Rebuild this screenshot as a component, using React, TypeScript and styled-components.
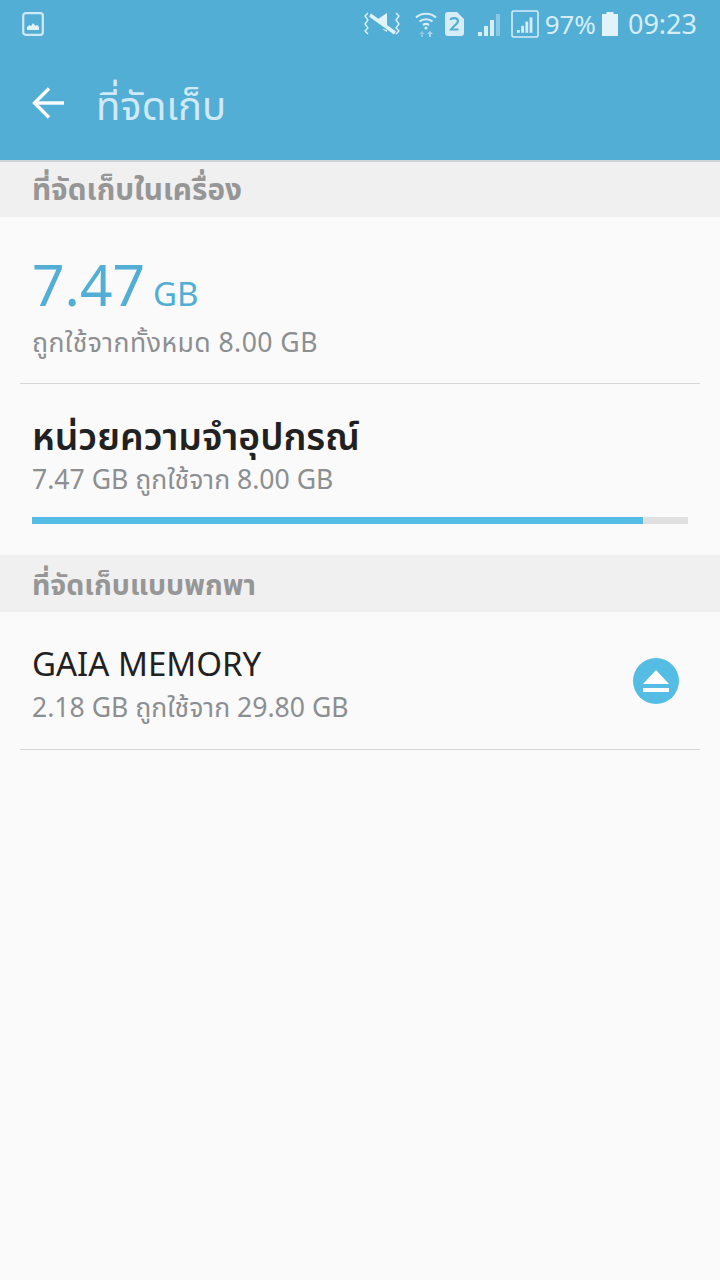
import React from "react";
import styled, { createGlobalStyle } from "styled-components";

const GlobalStyle = createGlobalStyle`
  html, body {
    margin: 0;
    padding: 0;
    background: #fafafa;
  }
  * {
    box-sizing: border-box;
  }
`;

const FONT = `"Noto Sans", "Noto Sans Thai", "Noto Sans Thai Looped", Roboto, sans-serif`;

const Page = styled.div`
  width: 720px;
  height: 1280px;
  overflow: hidden;
  background: #fafafa;
  font-family: ${FONT};
  display: flex;
  flex-direction: column;
`;

const Header = styled.header`
  height: 162px;
  background: #52aed5;
  border-bottom: 2px solid #cfd4d6;
  display: flex;
  flex-direction: column;
`;

const StatusBar = styled.div`
  height: 50px;
  padding: 0 23px 2px 22px;
  display: flex;
  align-items: center;
  color: #d6edf7;
`;

const StatusRight = styled.div`
  margin-left: auto;
  display: flex;
  align-items: center;
`;

const StatusText = styled.span<{ $gap: number; $size: number }>`
  font-size: ${(p) => p.$size}px;
  line-height: 50px;
  margin-left: ${(p) => p.$gap}px;
`;

const StatusIcon = styled.svg<{ $gap?: number }>`
  display: block;
  margin-left: ${(p) => p.$gap ?? 0}px;
`;

const ActionBar = styled.div`
  flex: 1;
  display: flex;
  align-items: center;
  padding: 0 0 4px 32px;
`;

const Title = styled.h1`
  margin: 0 0 0 32px;
  padding-top: 4px;
  font-size: 40px;
  line-height: 44px;
  font-weight: 400;
  color: #cfe9f5;
`;

const SectionHeader = styled.div<{ $tall?: boolean }>`
  height: ${(p) => (p.$tall ? 57 : 55)}px;
  padding-left: 32px;
  background: #f0f0f0;
  color: #969696;
  font-size: ${(p) => (p.$tall ? 28.5 : 29.7)}px;
  font-weight: 700;
  line-height: ${(p) => (p.$tall ? 58 : 54)}px;
`;

const UsageBlock = styled.section`
  height: 167px;
  margin: 0 20px;
  padding: 35px 12px 0;
  border-bottom: 1px solid #d6d6d6;
`;

const UsageLine = styled.div`
  display: flex;
  align-items: baseline;
  color: #52aed5;
  height: 64px;
`;

const UsageValue = styled.span`
  font-size: 57px;
  line-height: 64px;
`;

const UsageUnit = styled.span`
  font-size: 33px;
  margin-left: 8px;
`;

const SubText = styled.div<{ $top?: number; $wide?: boolean }>`
  color: #8c8f92;
  font-size: 26.6px;
  line-height: 34px;
  letter-spacing: ${(p) => (p.$wide ? 0.45 : 0)}px;
  margin-top: ${(p) => p.$top ?? 0}px;
`;

const DeviceBlock = styled.section`
  height: 171px;
  padding: 30px 32px 0;
`;

const ItemTitle = styled.div<{ $thai?: boolean }>`
  color: #212121;
  font-size: ${(p) => (p.$thai ? 37.3 : 33)}px;
  line-height: 44px;
  font-weight: ${(p) => (p.$thai ? 600 : 400)};
`;

const ProgressTrack = styled.div`
  height: 7px;
  margin-top: 21px;
  background: #e0e0e0;
`;

const ProgressFill = styled.div`
  height: 100%;
  background: #55bde3;
`;

const CardRow = styled.section`
  height: 138px;
  margin: 0 20px;
  padding: 30px 21px 0 12px;
  border-bottom: 1px solid #d6d6d6;
  display: flex;
  justify-content: space-between;
`;

const EjectButton = styled.button`
  width: 46px;
  height: 46px;
  margin-top: 16px;
  padding: 0;
  border: 0;
  border-radius: 50%;
  background: #55bde3;
  display: flex;
  align-items: center;
  justify-content: center;
`;

const PictureIcon = () => (
  <StatusIcon width="22" height="24" viewBox="0 0 22 24">
    <rect x="1.2" y="1.2" width="19.6" height="21.6" rx="2.5" fill="none" stroke="#cfe9f5" strokeWidth="2.2" />
    <path d="M5 18v-3l2.5-2 1.5 1.2L11 11l2.5 3 1.5-1.2 2 2.2v3z" fill="#e3f3fa" />
  </StatusIcon>
);

const VibrateIcon = () => (
  <StatusIcon width="38" height="24" viewBox="0 0 38 24" fill="none">
    <path d="M5 1l-3 3 3 4-3 4 3 4-3 3 3 3" stroke="#e3f3fa" strokeWidth="1.3" />
    <path d="M33 1l3 3-3 4 3 4-3 4 3 3-3 3" stroke="#e3f3fa" strokeWidth="1.3" />
    <path d="M10 7h5l9-6v14zM24 18v2l-5-3z" fill="#e3f3fa" />
    <path d="M7 3l25 18" stroke="#e3f3fa" strokeWidth="3.4" />
  </StatusIcon>
);

const WifiIcon = () => (
  <StatusIcon $gap={14} width="22" height="26" viewBox="0 0 22 26" fill="none">
    <path d="M1 6.5c5.5-5 14.500-5 20 0" stroke="#d6edf7" strokeWidth="2.2" />
    <path d="M4.500 10.500c3.500-3 9.500-3 13 0" stroke="#d6edf7" strokeWidth="2.2" />
    <path d="M8 14c1.800-1.300 4.200-1.300 6 0" stroke="#d6edf7" strokeWidth="2.2" />
    <circle cx="11" cy="17" r="1.600" fill="#d6edf7" />
    <path d="M7 20l3 3H8v3H6v-3H4z" fill="#8cc8e2" />
    <path d="M15 20l3 3h-2v3h-2v-3h-2z" fill="#a9d8ec" />
  </StatusIcon>
);

const SimIcon = () => (
  <StatusIcon $gap={8} width="19" height="24" viewBox="0 0 19 24">
    <path d="M3 0h9l7 7v14a3 3 0 0 1-3 3H3a3 3 0 0 1-3-3V3a3 3 0 0 1 3-3z" fill="#d6edf7" />
    <path d="M5.500 8c.5-2.500 7-3 7.500.8.300 2.700-5 5.500-7 8.700h7.500" fill="none" stroke="#52aed5" strokeWidth="2.200" />
  </StatusIcon>
);

const SignalBars = ({ dim }: { dim: number }) => (
  <>
    {[0, 1, 2, 3].map((i) => {
      const h = 4 + i * 6;
      return <rect key={i} x={i * 6} y={24 - h} width="4" height={h} fill={i >= dim ? "#8cc8e2" : "#d6edf7"} />;
    })}
  </>
);

const SignalIcon = () => (
  <StatusIcon $gap={14} width="24" height="26" viewBox="0 -1 24 26">
    <SignalBars dim={3} />
  </StatusIcon>
);

const BoxedSignalIcon = () => (
  <StatusIcon $gap={9} width="28" height="28" viewBox="0 0 28 28">
    <rect x="1" y="1" width="26" height="26" rx="1.500" fill="none" stroke="#d6edf7" strokeWidth="1.600" />
    <g transform="translate(6 6) scale(.7)">
      <SignalBars dim={4} />
    </g>
  </StatusIcon>
);

const BatteryIcon = () => (
  <StatusIcon $gap={6} width="16" height="24" viewBox="0 0 16 24">
    <path d="M4.500 0h7v2H16v22H0V2h4.500z" fill="#e3f3fa" />
  </StatusIcon>
);

const BackArrow = () => (
  <svg width="32" height="32" viewBox="0 0 32 32" fill="none" stroke="#fff" strokeWidth="3.400">
    <path d="M32 16H3" />
    <path d="M17 1.500L2.500 16 17 30.500" />
  </svg>
);

const EjectIcon = () => (
  <svg width="26" height="23" viewBox="0 0 26 23" fill="#fff">
    <path d="M13 0l13 14H0z" />
    <rect y="18" width="26" height="4" />
  </svg>
);

export default function App() {
  return (
    <Page>
      <GlobalStyle />
      <Header>
        <StatusBar>
          <PictureIcon />
          <StatusRight>
            <VibrateIcon />
            <WifiIcon />
            <SimIcon />
            <SignalIcon />
            <BoxedSignalIcon />
            <StatusText $gap={6} $size={26}>97%</StatusText>
            <BatteryIcon />
            <StatusText $gap={10} $size={27}>09:23</StatusText>
          </StatusRight>
        </StatusBar>
        <ActionBar>
          <BackArrow />
          <Title>ที่จัดเก็บ</Title>
        </ActionBar>
      </Header>

      <SectionHeader>ที่จัดเก็บในเครื่อง</SectionHeader>
      <UsageBlock>
        <UsageLine>
          <UsageValue>7.47</UsageValue>
          <UsageUnit>GB</UsageUnit>
        </UsageLine>
        <SubText $top={9} $wide>ถูกใช้จากทั้งหมด 8.00 GB</SubText>
      </UsageBlock>

      <DeviceBlock>
        <ItemTitle $thai>หน่วยความจำอุปกรณ์</ItemTitle>
        <SubText $top={4}>7.47 GB ถูกใช้จาก 8.00 GB</SubText>
        <ProgressTrack>
          <ProgressFill style={{ width: "93.1%" }} />
        </ProgressTrack>
      </DeviceBlock>

      <SectionHeader $tall>ที่จัดเก็บแบบพกพา</SectionHeader>
      <CardRow>
        <div>
          <ItemTitle>GAIA MEMORY</ItemTitle>
          <SubText $top={4}>2.18 GB ถูกใช้จาก 29.80 GB</SubText>
        </div>
        <EjectButton aria-label="eject">
          <EjectIcon />
        </EjectButton>
      </CardRow>
    </Page>
  );
}
